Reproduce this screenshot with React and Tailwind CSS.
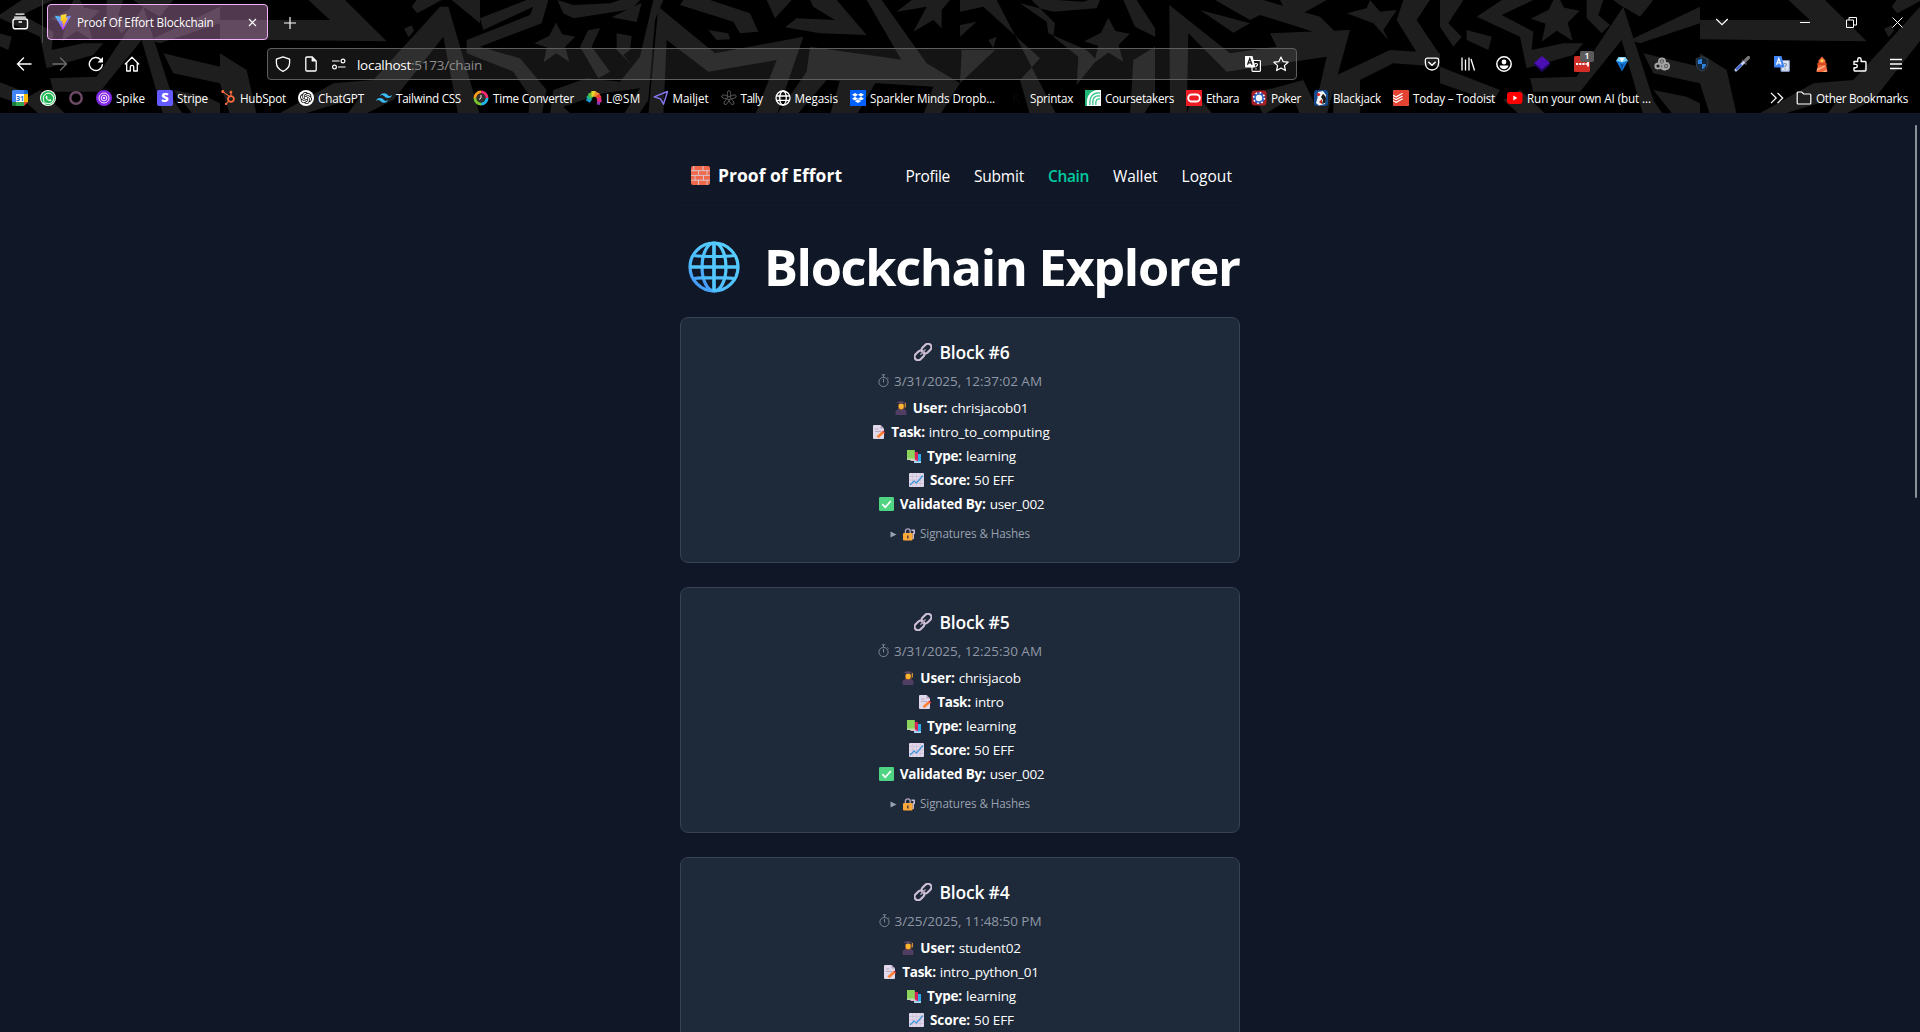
import { useLayoutEffect, useRef } from "react";
import { FaHubspot, FaDropbox, FaWhatsapp } from "react-icons/fa";
import { SiOpenai, SiTailwindcss, SiTodoist } from "react-icons/si";

// Text that spreads or tightens its letters to fill a given width.
function Fit({ w, className = "", children }) {
  const ref = useRef(null);
  useLayoutEffect(() => {
    const el = ref.current;
    el.style.letterSpacing = "0px";
    const natural = el.getBoundingClientRect().width;
    el.style.letterSpacing = `${(w - natural) / el.textContent.length}px`;
  }, [w, children]);
  return (
    <span ref={ref} className={`inline-block shrink-0 whitespace-pre ${className}`}>
      {children}
    </span>
  );
}

function Svg({ w = 16, h = 16, vb, children, className = "" }) {
  return (
    <svg width={w} height={h} viewBox={vb || `0 0 ${w} ${h}`} fill="none" className={`block shrink-0 ${className}`}>
      {children}
    </svg>
  );
}

/* ---------- theme artwork behind the toolbars ---------- */

const STAR = "0,-46 15,-18 46,-12 22,12 32,48 0,28 -30,50 -22,14 -52,4 -16,-14";

function Tile() {
  return (
    <g fill="#1e1e1e" stroke="none">
      <path d="M660 60H990L925 0H1035L1160 124L660 118Z" />
      <path d="M1212 86L1235 76L1242 92L1226 112ZM1250 0H1325L1252 40L1235 20Z" />
      <path d="M660 160L740 210L770 345H690L660 250Z" />
      <path d="M830 345L1000 250L1120 240L1320 20L1345 20L1440 345H1375L1330 110L1180 300L1090 345H1040L1080 290L900 345Z" />
      <path d="M1355 0H1440V70Z" />
      <path d="M1440 55L1580 0H1645L1625 70L1440 140L1560 175L1640 270L1625 345H1585L1590 290L1540 215L1400 160V120L1590 45L1600 20L1450 90Z" />
      <path d="M1672 0L1720 15L1830 10L1860 0H1920L1895 28L1720 55L1690 40Z" />
      <path d="M1835 52L1925 8L1910 66Z" />
      <polygon points={STAR} transform="translate(1668 125) scale(1.25)" />
      <path d="M1765 90L1800 85L1775 140L1830 215L1795 235L1740 140ZM1850 100L1895 108L1890 150L1870 165L1895 195L1850 150Z" />
      <path d="M1660 270L1760 235L1860 245L1920 170L1960 0H1990L1965 60L1945 300L1915 345H1870L1920 265L1810 280L1690 320L1715 345H1650Z" />
      <path d="M1975 20L2145 160L2410 110L2330 345H2265L2330 180L2125 215L2000 120L1990 345H1945Z" />
      <path d="M2050 0H2130L2250 40L2275 95L2220 100L2200 65L2040 15ZM2125 90L2185 100L2190 118L2150 120Z" />
      <path d="M2300 0H2375L2325 55ZM2355 82L2390 55L2505 60L2440 20L2430 0H2510L2600 105L2460 100Z" />
      <path d="M2600 0H2645L2780 190H2710ZM2690 35L2735 0H2850L2825 30L2825 85L2800 60L2740 95L2780 20Z" />
      <path d="M2430 140L2780 190L2880 250L2820 345H2770L2800 260L2480 240L2390 345H2330L2420 215Z" />
      <path d="M2520 240L2640 225L2570 345H2490Z" />
      <path d="M2880 0H2990L3170 345H3090L3060 240L3120 175L2950 20L2880 35Z" />
      <path d="M2880 75L2930 65L2880 110ZM2885 150L2985 150L2880 250ZM2965 120L2990 110L2980 145Z" />
      <path d="M3060 10L3160 35L3290 25L3300 0H3265L3250 5L3170 0H3095L3165 70L3160 110L3235 170L3230 255L3290 180L3260 150L3145 100L3140 65Z" />
      <polygon points={STAR} transform="translate(3325 118) scale(1.4)" />
      <path d="M3370 0H3410L3465 85V110L3405 80ZM3400 180L3465 140V290L3430 345H3390Z" />
      <path d="M3508 15L3690 160L3830 140L3810 100L4050 90L3980 345H3940L3980 170L3680 215L3565 100L3560 345H3510Z" />
      <path d="M3600 30L3750 70L3700 98ZM3645 0H3790L3960 50L4010 100L3870 130L3940 95L3780 45L3750 60Z" />
      <path d="M3840 0H3980L3900 45L3855 30ZM4040 40L4100 25L4110 0L4140 35L4190 30L4150 90L4165 120L4120 70Z" />
      <path d="M4210 0H4290L4250 60L4320 165L4270 190L4190 60ZM4000 230L4170 150L4320 160V200L4180 190L4080 240V345H4000Z" />
      <path d="M3580 270L3640 345H3560ZM3760 280L3910 240L3960 345H3900L3880 290L3790 345Z" />
      <path d="M4320 0H4390L4345 70L4385 110L4360 140L4320 80Z" />
      <path d="M4430 50L4505 0H4600L4505 45L4600 95L4595 150L4690 130L4750 130L4720 165L4580 205L4560 110Z" />
      <polygon points={STAR} transform="translate(4670 50) scale(1.5)" />
      <path d="M4760 0H4810L4795 45L4830 75L4805 100L4760 55ZM4400 90L4475 110L4465 150L4400 120Z" />
      <path d="M4870 20L4960 300L4990 345H4930L4865 120L4740 275L4600 275L4590 235L4730 230Z" />
      <path d="M4320 200L4500 270L4480 305L4320 250ZM4560 270L4640 345H4560L4510 300Z" />
      <path d="M4890 120L5100 20V70L4920 130ZM4930 160L5100 200V250L4960 220ZM4960 270L5060 290L5100 310V345H5020Z" />
      <path d="M4840 0H4960L4920 50L4860 15Z" />
    </g>
  );
}

function ThemeArt() {
  return (
    <svg className="absolute inset-0 h-[113px] w-[1920px]" viewBox="0 0 5760 339" preserveAspectRatio="none">
      <Tile />
      <g transform="translate(-4440 0)"><Tile /></g>
      <g transform="translate(4440 0)"><Tile /></g>
    </svg>
  );
}

/* ---------- browser tab strip ---------- */

function ViteLogo() {
  return (
    <Svg vb="0 0 256 257">
      <defs>
        <linearGradient id="va" x1="0" x2=".6" y1="0" y2="1"><stop stopColor="#41D1FF" /><stop offset="1" stopColor="#BD34FE" /></linearGradient>
        <linearGradient id="vb" x1=".4" x2=".5" y1="0" y2="1"><stop stopColor="#FFEA83" /><stop offset=".1" stopColor="#FFDD35" /><stop offset="1" stopColor="#FFA800" /></linearGradient>
      </defs>
      <path fill="url(#va)" d="M255 38L134 253c-2 4-9 4-11 0L1 38c-3-5 1-11 7-10l120 22 120-22c5-1 10 5 7 10z" />
      <path fill="url(#vb)" d="M185 0L97 17c-2 0-3 2-3 3l-5 92c0 2 2 4 4 3l24-5c3-1 5 1 4 4l-7 36c-1 2 1 5 4 4l15-5c3-1 5 2 4 4l-12 56c0 3 4 5 6 2l75-151c1-3-1-5-4-5l-26 5c-2 1-4-1-4-4l17-59c1-2-1-5-4-4z" />
    </Svg>
  );
}

function TabStrip() {
  return (
    <div className="flex h-[44px] items-center">
      <div className="flex h-[43px] w-[43px] items-center self-start border-r border-[#4a4a4a] pl-3">
        <Svg w={17} h={17} className="text-white">
          <path d="M4 1.2h8M2.5 4.1h11" stroke="currentColor" strokeWidth="1.3" strokeLinecap="round" />
          <rect x="1" y="6" width="14.5" height="9.8" rx="2.2" stroke="currentColor" strokeWidth="1.4" />
          <path d="M6.5 9h3.5" stroke="currentColor" strokeWidth="1.5" />
        </Svg>
      </div>
      <div className="ml-1 flex h-[36px] w-[221px] items-center rounded-[4px] border border-[#f0b0fa] bg-[rgba(200,140,195,0.4)] pl-[7px]">
        <ViteLogo />
        <Fit w={136.5} className="ml-[6px] pt-0.5 text-[11.7px] text-white">Proof Of Effort Blockchain</Fit>
        <Svg w={9} h={9} className="ml-[34px]"><path d="M1 1l7 7M8 1l-7 7" stroke="#fff" strokeWidth="1.2" /></Svg>
      </div>
      <Svg w={12} h={12} className="mt-px ml-4"><path d="M6 0v12M0 6h12" stroke="#fff" strokeWidth="1.2" /></Svg>
      <Svg w={14} h={8} className="mr-[71px] ml-auto"><path d="M1.2 1L7 6.6 12.8 1" stroke="#fff" strokeWidth="1.2" /></Svg>
      <Svg w={11} h={11} className="mr-[35px]"><path d="M0 5.5h10" stroke="#fff" /></Svg>
      <Svg w={11} h={11} className="mr-[35px]"><path d="M.5 3h7v7.500h-7zM3 3V.5h7.500V8H7.500" stroke="#fff" /></Svg>
      <Svg w={11} h={11} className="mr-[17px]"><path d="M.5.5l10 10M10.500.5l-10 10" stroke="#fff" /></Svg>
    </div>
  );
}

/* ---------- navigation toolbar ---------- */

const Slot = ({ wide, children }) => (
  <div className={wide ? "flex w-10 shrink-0 justify-center" : "flex w-9 shrink-0 justify-center"}>{children}</div>
);

function TranslateIcon({ front, back, ink }) {
  return (
    <Svg>
      <rect x="7" y="4.500" width="8.400" height="10.800" rx=".8" fill={back} stroke={ink} strokeWidth="1.2" />
      <path d="M9.500 8.500c.3-1.400 3.200-1.300 3 .2-.1 1-1.500 1.200-1.500 2.400M11 12.300v1.100" stroke={ink} strokeWidth="1.1" />
      <path d="M0 0h7.500l3 11.500H1A1 1 0 010 10.500z" fill={front} />
      <path d="M2.500 8.800L4.800 2.500l2.300 6.300M3.300 6.800h3" stroke={back === "#151515" ? "#151515" : "#fff"} strokeWidth="1.2" />
    </Svg>
  );
}

function NavBar() {
  return (
    <div className="flex h-[40px] items-center pl-[6px] text-white">
      <Slot><Svg><path d="M15 8H1.500M7.500 2L1.500 8l6 6" stroke="currentColor" strokeWidth="1.4" strokeLinecap="round" /></Svg></Slot>
      <Slot><Svg><path d="M1 8h13.500M8.500 2l6 6-6 6" stroke="#6d6d6d" strokeWidth="1.3" strokeLinecap="round" /></Svg></Slot>
      <Slot><Svg><path d="M14.300 8.800A6.500 6.500 0 1112.500 3.500l1.800 1.800" stroke="currentColor" strokeWidth="1.4" strokeLinecap="round" /><path d="M15 1v5.500H9.500z" fill="currentColor" /></Svg></Slot>
      <Slot><Svg><path d="M1.300 8L8 1.300 14.700 8M2.700 7v8h3.600v-4a1.700 1.700 0 013.400 0v4h3.600V7" stroke="currentColor" strokeWidth="1.300" strokeLinejoin="round" strokeLinecap="round" /></Svg></Slot>

      <div className="ml-[117px] flex h-[32px] w-[1030px] shrink-0 items-center rounded-[4px] border border-[#5e5e5e] bg-white/8">
        <div className="ml-[7px] flex w-[83px] items-center gap-3">
          <Svg><path d="M8 .8l6.600 2.400v3.600c0 4-2.600 6.900-6.600 8.500C4 13.700 1.400 10.800 1.400 6.800V3.200z" stroke="#fff" strokeWidth="1.300" strokeLinejoin="round" /></Svg>
          <Svg><path d="M2.800 2a1 1 0 011-1h5.400l4 4v9a1 1 0 01-1 1H3.800a1 1 0 01-1-1z" stroke="#fff" strokeWidth="1.300" /><path d="M8.600 1v4.600h4.600z" fill="#fff" /></Svg>
          <Svg><circle cx="12" cy="5" r="1.900" stroke="#fff" strokeWidth="1.200" /><circle cx="3.500" cy="11" r="1.900" stroke="#fff" strokeWidth="1.200" /><path d="M1 5h7.500M7 11h7.500" stroke="#fff" strokeWidth="1.200" /></Svg>
        </div>
        <Fit w={54} className="-ml-px pt-0.5 text-[13.500px] text-white">localhost</Fit>
        <Fit w={71} className="pt-0.5 text-[13.500px] text-[#8e8e8e]">:5173/chain</Fit>
        <div className="mr-[7px] ml-auto flex items-center gap-3">
          <TranslateIcon front="#fff" back="#151515" ink="#fff" />
          <Svg><path d="M8 1l2.100 4.600 5 .6-3.700 3.400 1 5L8 12.100l-4.400 2.500 1-5L.9 6.200l5-.6z" stroke="#fff" strokeWidth="1.200" strokeLinejoin="round" /></Svg>
        </div>
      </div>

      <div className="ml-[117px] flex items-center">
        <Slot><Svg><path d="M1.400 4c0-1.200.8-1.800 1.800-1.800h9.600c1 0 1.800.6 1.800 1.800v3c0 4.400-3 7-6.600 7S1.400 11.400 1.400 7z" stroke="#fff" strokeWidth="1.300" /><path d="M4.800 6.200L8 9.300l3.200-3.100" stroke="#fff" strokeWidth="1.500" strokeLinecap="round" /></Svg></Slot>
        <Slot><Svg><path d="M2 1.500v13M5.500 3.500v11M9 1.500v13M11 3l3.500 11.500" stroke="#fff" strokeWidth="1.300" /></Svg></Slot>
        <Slot><Svg><circle cx="8" cy="8" r="7.200" stroke="#fff" strokeWidth="1.500" /><circle cx="8" cy="6" r="2.400" fill="#fff" /><path d="M3.500 9.600h9c-.6 2.500-2.400 3.700-4.500 3.700s-3.900-1.200-4.500-3.700z" fill="#fff" /></Svg></Slot>
        <Slot wide><Svg><path d="M8 0l8 7-8 6.500L0 7z" fill="#4a10b4" /><path d="M0 7l8 6.500L16 7v1.800L8 16 0 8.800z" fill="#240768" /></Svg></Slot>
        <Slot wide>
          <div className="relative">
            <Svg><rect width="16" height="16" rx="1.500" fill="#d32d27" /><path d="M2 8h2.200M5.200 8h2.200M8.400 8h2.200M11.600 8h1.200M14 5.500v5" stroke="#fff" strokeWidth="1.800" /></Svg>
            <span className="absolute -top-[5px] left-[6px] flex h-[11px] w-[14px] items-center justify-center rounded-[2px] bg-[#5b5b5b] text-[9.500px] font-semibold">1</span>
          </div>
        </Slot>
        <Slot wide><Svg><path d="M4.500 1h7l2.500 4L8 9.500 2 5z" fill="#7fd4fb" /><path d="M2 4.500L8 15.500 14 4.500 8 6.500z" fill="#1477d4" /><path d="M5.500 2h5L8 6z" fill="#fff" /><path d="M6.500 8h3L8 15.500z" fill="#0a4ea0" /></Svg></Slot>
        <Slot wide><Svg><g stroke="#a5a5a5" strokeWidth="2"><circle cx="4" cy="10" r="2.600" /><circle cx="8" cy="5.500" r="3" /><circle cx="12" cy="10" r="3" /><circle cx="12" cy="10" r=".6" /><circle cx="8" cy="5.500" r=".6" /><path d="M7 11.500c1 2 3 2 5 2" /></g></Svg></Slot>
        <Slot wide><Svg><path d="M8 .7L13.800 3v4.500c0 3.600-2.500 6.200-5.800 7.800-3.300-1.600-5.800-4.200-5.800-7.800V3z" fill="#132437" stroke="#38434e" /><path d="M8 2.500L3.800 4v4H8zM8 8h4.200c-.3 2.500-2 4.300-4.200 5.600z" fill="#2d7fd8" /></Svg></Slot>
        <Slot wide><Svg><path d="M10 6l4.500-4.500" stroke="#777" strokeWidth="3.200" strokeLinecap="round" /><path d="M8 4l4.500 4.500" stroke="#4d4d4d" strokeWidth="2" /><path d="M9.500 6.500L2 14" stroke="#c4d0f3" strokeWidth="3" strokeLinecap="round" /><path d="M7.500 8.500L2.200 13.800" stroke="#3f63d6" strokeWidth="2" /></Svg></Slot>
        <Slot wide><TranslateIcon front="#4285f4" back="#dfe5ef" ink="#7b8fb8" /></Slot>
        <Slot wide><Svg><path d="M4.500 4.500L8 .5l3.500 4v3h1L12.300 9.500 13.500 16h-11L3.700 9.500 3.500 7.500h1z" fill="#f4683c" /><path d="M3.500 7h9v2h-9z" fill="#d9481f" /><path d="M3 13l7.500-3.500.9 1L2.700 15zM8.500 16l4-2.200.3 1.500-1.300.7z" fill="#ffb48a" /><circle cx="8" cy="4.700" r="1.500" fill="#ffd84a" /></Svg></Slot>
        <Slot><Svg><path d="M2 5.500h3.700v-2a1.700 1.700 0 013.400 0v2H13a1 1 0 011 1V14a1 1 0 01-1 1H3a1 1 0 01-1-1v-2.200h1.600a1.700 1.700 0 000-3.400H2z" stroke="#fff" strokeWidth="1.400" strokeLinejoin="round" /></Svg></Slot>
        <Slot><Svg><path d="M2 3.500h12M2 8h12M2 12.500h12" stroke="#fff" strokeWidth="1.400" /></Svg></Slot>
      </div>
    </div>
  );
}

/* ---------- bookmarks ---------- */

const CalendarIcon = () => (
  <Svg>
    <path d="M0 1.500A1.500 1.500 0 011.500 0H12v4H4v8H0z" fill="#4285f4" /><path d="M12 0h2.500A1.500 1.500 0 0116 1.500V4h-4z" fill="#1967d2" />
    <path d="M12 4h4v8h-4z" fill="#fbbc04" /><path d="M4 12h8v4H4z" fill="#34a853" /><path d="M0 12h4v4H1.500A1.500 1.500 0 010 14.500z" fill="#188038" /><path d="M12 12h4l-4 4z" fill="#ea4335" />
    <path d="M4 4h8v8H4z" fill="#fff" />
    <text x="8" y="10.600" textAnchor="middle" fontSize="7.200" fontWeight="700" fill="#1a73e8">31</text>
  </Svg>
);
const WhatsAppIcon = () => (
  <div className="flex size-4 items-center justify-center rounded-full bg-white"><div className="flex size-[14px] items-center justify-center rounded-full bg-[#1fb855] text-white"><FaWhatsapp size={13} /></div></div>
);
const RingIcon = () => <Svg><circle cx="8" cy="8" r="5.700" stroke="#6d4a66" strokeWidth="2.400" /></Svg>;
const SpikeIcon = () => (
  <Svg><circle cx="8" cy="8" r="8" fill="#8128e8" /><g stroke="#fff" strokeWidth=".9"><circle cx="8" cy="8" r="5" /><circle cx="8" cy="8" r="2.800" /></g><circle cx="8" cy="8" r="1.100" fill="#fff" /></Svg>
);
const StripeIcon = () => (
  <div className="flex size-4 items-center justify-center rounded-[2px] bg-[#635bff] text-[13px] leading-none font-extrabold text-white">S</div>
);
const ChatIcon = () => (
  <div className="flex size-4 items-center justify-center rounded-full bg-white text-black"><SiOpenai size={12} /></div>
);
const TimeIcon = () => (
  <Svg>
    <g strokeWidth="3"><path d="M8 2a6 6 0 016 6" stroke="#f52c6f" /><path d="M14 8a6 6 0 01-6 6" stroke="#22b8e6" /><path d="M8 14a6 6 0 01-6-6" stroke="#7bc42d" /><path d="M2 8a6 6 0 016-6" stroke="#f89a1d" /></g>
    <circle cx="8" cy="8" r="4.400" fill="#333" /><path d="M8 5v3l-2 1.500" stroke="#eee" />
  </Svg>
);
const FanIcon = () => (
  <Svg>
    <g strokeWidth="4.400"><path d="M5 11L1 8.500" stroke="#2196c9" /><path d="M5.200 9L1.800 5.500" stroke="#1cb48b" /><path d="M6 7.500L4 2.800" stroke="#64bd3a" /><path d="M7.800 6.500L7.500 1" stroke="#e9d42c" /><path d="M9.500 7L11.500 2.500" stroke="#f2932d" /><path d="M10.500 8l4-2.500" stroke="#e8452f" /><path d="M11 10.500l4.500-.5" stroke="#d92c83" /><path d="M11 13l3 .5" stroke="#8a35b8" strokeWidth="3" /></g>
  </Svg>
);
const MailjetIcon = () => <Svg><path d="M1.200 6.800L14.500 1.500 10.500 14.200 7.500 8.800z" stroke="#8577f0" strokeWidth="1.400" strokeLinejoin="round" /></Svg>;
const TallyIcon = () => (
  <Svg><g stroke="#5c5c5c" strokeWidth=".9">
    {[0, 72, 144, 216, 288].map((a) => <ellipse key={a} cx="8" cy="3.800" rx="1.700" ry="3.200" transform={`rotate(${a} 8 8.200)`} />)}
  </g></Svg>
);
const GlobeIcon = () => <Svg><g stroke="#fff" strokeWidth="1.300"><circle cx="8" cy="8" r="7" /><ellipse cx="8" cy="8" rx="3.300" ry="7" /><path d="M1.200 6h13.600M1.200 10.300h13.600" /></g></Svg>;
const DropboxIcon = () => <div className="flex size-4 items-center justify-center bg-[#0061fe] text-white"><FaDropbox size={12} /></div>;
const SprintaxIcon = () => <Svg><path d="M4 3v10M9 3L5 8l5 5" stroke="#050505" strokeWidth="2" /></Svg>;
const CourseIcon = () => (
  <Svg><rect width="16" height="16" fill="#fff" /><path d="M0 0h11C4 2 1 7 2 16H0z" fill="#1fb775" /><path d="M15 3C8 2 4 7 5 15M15 6c-5-1-8 2-7 9M15 9c-3-1-5 2-4 6" stroke="#2cc486" strokeWidth="1.300" /></Svg>
);
const EtharaIcon = () => <Svg><rect width="16" height="16" fill="#ee1c25" /><rect x="2.200" y="4.500" width="11.600" height="7" rx="3.500" stroke="#fff" strokeWidth="1.900" /></Svg>;
const PokerIcon = () => (
  <Svg><rect x=".5" y=".5" width="15" height="15" rx="3" fill="#a51f25" /><circle cx="8" cy="8" r="5.800" fill="#2b62c4" /><circle cx="8" cy="8" r="5.400" stroke="#fff" strokeWidth="1.600" strokeDasharray="1.600 2.640" /><circle cx="8" cy="8" r="3.200" fill="#f6f6f6" /></Svg>
);
const BlackjackIcon = () => (
  <Svg><rect x="1" width="14" height="16" rx="3" fill="#134a8e" /><path d="M5 2l5-1 3 4-1 9-6 1.500-3-2.500 1.500-5z" fill="#f4f4f4" /><path d="M10 4c3 2 4 5 2 9l-3 1 1-4-2-3z" fill="#1a1a1a" /><circle cx="5.500" cy="4.500" r="1.600" fill="#d22" /><path d="M6 12l3-3v5z" fill="#c22" /></Svg>
);
const TodoistIcon = () => <div className="flex size-4 items-center justify-center rounded-[2px] bg-white text-[#e44332]"><SiTodoist size={16} /></div>;
const YoutubeIcon = () => <Svg><rect y="2" width="15.500" height="12" rx="3" fill="#f00" /><path d="M6.300 5.500v5l4-2.500z" fill="#fff" /></Svg>;

const BOOKMARKS = [
  [CalendarIcon], [WhatsAppIcon], [RingIcon],
  [SpikeIcon, "Spike", 29], [StripeIcon, "Stripe", 31],
  [() => <FaHubspot size={15} className="w-4 shrink-0 text-[#ff6b3d]" />, "HubSpot", 46],
  [ChatIcon, "ChatGPT", 46],
  [() => <SiTailwindcss size={16} className="shrink-0 text-[#38bdf8]" />, "Tailwind CSS", 65],
  [TimeIcon, "Time Converter", 81], [FanIcon, "L@SM", 34.5], [MailjetIcon, "Mailjet", 36],
  [TallyIcon, "Tally", 22], [GlobeIcon, "Megasis", 43.5], [DropboxIcon, "Sparkler Minds Dropb...", 125],
  [SprintaxIcon, "Sprintax", 43], [CourseIcon, "Coursetakers", 69], [EtharaIcon, "Ethara", 33],
  [PokerIcon, "Poker", 30], [BlackjackIcon, "Blackjack", 48],
  [TodoistIcon, "Today – Todoist", 82], [YoutubeIcon, "Run your own AI (but ...", 124],
];

function BookmarkBar() {
  return (
    <div className="flex h-[29px] items-center gap-3 pb-px pl-3 text-[11.700px] text-white">
      {BOOKMARKS.map(([Icon, label, w], i) => (
        <div key={i} className={label === "Sprintax" ? "ml-[3px] flex shrink-0 items-center gap-1" : "flex shrink-0 items-center gap-1"}>
          <Icon />
          {label && <Fit w={w} className="pt-0.5">{label}</Fit>}
        </div>
      ))}
      <Svg w={14} h={12} className="ml-auto"><path d="M1 .8L6.200 6 1 11.200M7.500.8L12.700 6l-5.200 5.200" stroke="#fff" strokeWidth="1.200" /></Svg>
      <div className="mr-3 flex items-center gap-1">
        <Svg><path d="M1.200 3a1 1 0 011-1h3.500l2 2h6.100a1 1 0 011 1v8a1 1 0 01-1 1H2.200a1 1 0 01-1-1z" stroke="#fff" strokeWidth="1.200" /></Svg>
        <Fit w={92} className="pt-0.5">Other Bookmarks</Fit>
      </div>
    </div>
  );
}

/* ---------- emoji drawings ---------- */

const Bricks = () => (
  <Svg w={19} h={19}>
    <rect width="19" height="19" rx="2" fill="#f0694a" />
    <path d="M0 4.700h19M0 9.400h19M0 14.200h19M2.800 0v4.700M12 0v4.700M7.500 4.700v4.700M16 4.700v4.700M4 9.400v4.800M12.500 9.400v4.800M7.500 14.200V19M16 14.200V19" stroke="#d9c3cc" />
  </Svg>
);
const BigGlobe = () => (
  <Svg w={52} h={52}>
    <defs><linearGradient id="gg" x1="1" y1="0" x2="0" y2="1"><stop stopColor="#58d3ff" /><stop offset=".7" stopColor="#4dbcff" /><stop offset="1" stopColor="#3f7ff0" /></linearGradient></defs>
    <g stroke="url(#gg)" strokeWidth="3.200">
      <circle cx="26" cy="26" r="24" /><ellipse cx="26" cy="26" rx="12" ry="24" />
      <path d="M26 2L26.010 50M2 26L50 26.010M5.500 14.500C16 15.800 36 15.800 46.500 14.500M5.500 37.500C16 36.200 36 36.200 46.500 37.500" />
    </g>
    <path d="M26 2v48M2 26h48" stroke="#52c8ff" strokeWidth="3.200" />
  </Svg>
);
const Chain = () => (
  <Svg w={18} h={18}>
    <g stroke="#cdbfd4" strokeWidth="2.200"><rect x="7" y="2.100" width="11" height="7" rx="3.500" transform="rotate(-45 12.500 5.600)" /><rect x="0" y="8.900" width="11" height="7" rx="3.500" transform="rotate(-45 5.500 12.400)" /></g>
    <path d="M6.800 11.200l4.400-4.400" stroke="#a898b2" strokeWidth="1.500" strokeLinecap="round" />
  </Svg>
);
const Stopwatch = () => (
  <Svg w={11} h={14}><circle cx="5.500" cy="8" r="4.600" stroke="#7b8593" /><path d="M5.500 8.500V4.800M5.500 3.200V1M3.800.8h3.400M9.200 3.400l1.200 1.200" stroke="#7b8593" /></Svg>
);
const Student = () => (
  <Svg w={12} h={14}>
    <path d="M3 3h6.500v5.500L8 10H4.500L3 8.500z" fill="#7a4a35" /><ellipse cx="6.200" cy="5.200" rx="2.500" ry="3" fill="#fbb52f" />
    <path d="M.8 1.300L6 0l5 1.300L6 2.800z" fill="#594564" /><path d="M.5 14v-3.200C.5 9 2 8.400 4 8.200L6 9.800 8 8.200c2 .2 3.500.8 3.500 2.600V14z" fill="#4f3d63" />
    <path d="M10.300 2v4.500" stroke="#f9a62b" />
  </Svg>
);
const Memo = () => (
  <Svg w={12} h={14}><path d="M0 1a1 1 0 011-1h6.500L11 3.500V13a1 1 0 01-1 1H1a1 1 0 01-1-1z" fill="#e1d8e9" /><path d="M7.500 0v3.500H11z" fill="#b4a5bf" /><path d="M2 4h3.500M2 6.500h6" stroke="#b9abc4" /><path d="M4.500 12.300L10.300 7" stroke="#ff8134" strokeWidth="2.800" /><path d="M9.800 6L12 8.200" stroke="#e73a4b" strokeWidth="1.300" /></Svg>
);
const Books = () => (
  <Svg w={14} h={13}><rect x="7" y="4" width="7" height="9" fill="#28a9ec" /><path d="M7 11.300h7V13H7z" fill="#b5d8f3" /><rect x="4" y="2" width="7" height="9" fill="#d52157" /><path d="M3.500 9.800h6V11h-6z" fill="#e9b6cc" /><rect width="7.800" height="9.800" fill="#8cd35b" /><path d="M0 8.600h7.800v1.200H0z" fill="#c8e7c6" /></Svg>
);
const ChartUp = () => (
  <Svg w={15} h={14}><rect width="15" height="14" rx="1" fill="#e1d9eb" /><path d="M0 3.500h15M0 7h15M0 10.500h15M3.800 0v14M7.500 0v14M11.200 0v14" stroke="#c5b8d2" strokeWidth=".6" /><path d="M1 12l4-4 2.500 2 3-3.500L14 2.500" stroke="#3b94dc" strokeWidth="1.200" /></Svg>
);
const Check = () => <Svg w={15} h={14}><rect width="15" height="14" rx="1.200" fill="#4fd482" /><path d="M3.300 7.200l3 3 5.500-6.200" stroke="#fff" strokeWidth="1.700" /></Svg>;
const Lock = () => (
  <Svg w={12} h={13}><path d="M8.500 2.200h2.700v3.300h-1V11" stroke="#c8bcd5" strokeWidth="1.600" strokeLinejoin="round" /><path d="M2.400 6V3.300a2.400 2.400 0 014.800 0V6" stroke="#b1a2bd" strokeWidth="1.400" /><rect y="5" width="9.600" height="7.500" rx="1" fill="#fba838" /><path d="M4.800 7.500v3" stroke="#4c3a45" strokeWidth="1.500" /></Svg>
);

/* ---------- page ---------- */

function Row({ icon, label, lw, value, vw }) {
  return (
    <div className="flex h-6 items-center justify-center pl-[3px] text-[13.500px] text-white">
      {icon}
      <Fit w={lw} className="ml-[6px] font-bold">{label}</Fit>
      <Fit w={vw} className="ml-1">{value}</Fit>
    </div>
  );
}

function BlockCard({ n, time, tw, user, uw, task, kw }) {
  return (
    <article className="h-[246px] shrink-0 rounded-lg border border-gray-700 bg-gray-800 pt-5">
      <h2 className="flex h-7 items-center justify-center gap-2 pl-[3px] text-[17.500px] font-semibold text-white"><Chain /><Fit w={70}>{`Block #${n}`}</Fit></h2>
      <p className="flex h-[30px] items-center justify-center gap-[5px] text-[13.500px] text-[#8f98a6]"><Stopwatch /><Fit w={tw}>{time}</Fit></p>
      <div>
        <Row icon={<Student />} label="User:" lw={34.5} value={user} vw={uw} />
        <Row icon={<Memo />} label="Task:" lw={33.5} value={task} vw={kw} />
        <Row icon={<Books />} label="Type:" lw={35} value="learning" vw={50} />
        <Row icon={<ChartUp />} label="Score:" lw={40} value="50 EFF" vw={40} />
        <Row icon={<Check />} label="Validated By:" lw={86} value="user_002" vw={54.5} />
      </div>
      <div className="mt-[6px] flex h-6 items-center justify-center text-[11.700px] text-gray-400">
        <Svg w={7} h={7}><path d="M.5.5v6l6-3z" fill="#98a1af" /></Svg>
        <span className="w-[6px]" /><Lock />
        <Fit w={110} className="ml-[5px]">Signatures &amp; Hashes</Fit>
      </div>
    </article>
  );
}

export default function App() {
  return (
    <div className="flex h-[1032px] w-[1920px] flex-col overflow-hidden bg-[#101827] font-['Open_Sans','Noto_Sans',sans-serif]">
      <header className="relative h-[113px] shrink-0 overflow-hidden bg-black">
        <ThemeArt />
        <div className="relative">
          <TabStrip />
          <NavBar />
          <BookmarkBar />
        </div>
      </header>

      <main className="flex min-h-0 flex-1 justify-center">
        <div className="w-[680px]" />
        <div className="flex w-[560px] shrink-0 flex-col">
          <nav className="mt-8 flex h-[61px] shrink-0 items-center border-b border-[#141a28] pl-[11px] text-white">
            <Bricks />
            <Fit w={124} className="ml-2 text-[17.500px] font-bold">Proof of Effort</Fit>
            <div className="mt-[3px] ml-auto flex gap-6 pr-2 text-[15.500px]">
              <Fit w={44.500}>Profile</Fit>
              <Fit w={50}>Submit</Fit>
              <Fit w={41} className="font-semibold text-[#00c9a0]">Chain</Fit>
              <Fit w={44.500}>Wallet</Fit>
              <Fit w={50.5}>Logout</Fit>
            </div>
          </nav>
          <h1 className="mt-[25px] flex h-[72px] shrink-0 items-center pl-2 text-white">
            <BigGlobe />
            <Fit w={475.500} className="ml-6 text-[50.500px] leading-[72px] font-bold">Blockchain Explorer</Fit>
          </h1>
          <section className="mt-[14px] flex shrink-0 flex-col gap-6">
            <BlockCard n={6} time="3/31/2025, 12:37:02 AM" tw={148} user="chrisjacob01" uw={77} task="intro_to_computing" kw={121} />
            <BlockCard n={5} time="3/31/2025, 12:25:30 AM" tw={148} user="chrisjacob" uw={62} task="intro" kw={29} />
            <BlockCard n={4} time="3/25/2025, 11:48:50 PM" tw={147} user="student02" uw={62} task="intro_python_01" kw={99} />
          </section>
        </div>
        <div className="flex w-[680px] justify-end pt-3 pr-[3px]">
          <div className="h-[373px] w-[2px] rounded bg-[#8b8f98]" />
        </div>
      </main>
    </div>
  );
}
